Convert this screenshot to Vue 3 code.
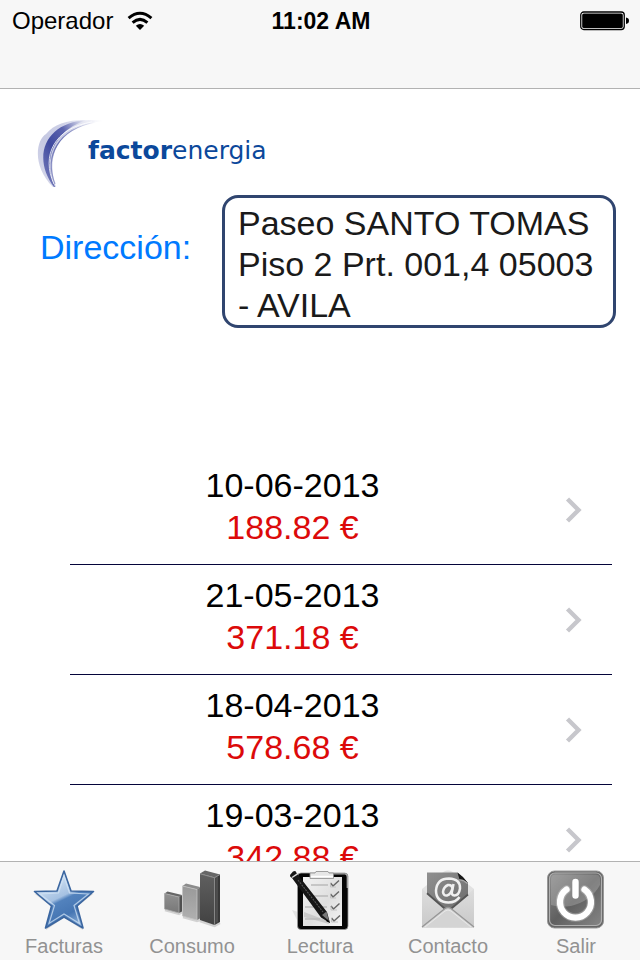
<template>
  <div class="screen">
    <header class="top-bar">
      <div class="status">
        <div class="carrier">
          <span>Operador</span>
          <svg class="wifi" viewBox="0 0 26 20" aria-hidden="true">
            <g fill="none" stroke="#000" stroke-width="3">
              <path d="M1.6 7.2 Q13 -2.6 24.4 7.2" />
              <path d="M5.6 11.6 Q13 5.2 20.4 11.6" />
            </g>
            <path d="M8.8 14.8 Q13 11.2 17.2 14.8 L13 19 Z" />
          </svg>
        </div>
        <time class="clock">11:02 AM</time>
        <div class="battery-wrap">
          <svg class="battery" viewBox="0 0 50 20" aria-hidden="true">
            <rect x="0.75" y="1" width="43.5" height="17.5" rx="3" fill="#fff" stroke="#000" stroke-width="1.3" />
            <rect x="2.2" y="2.4" width="40.6" height="14.7" rx="1.6" />
            <path d="M46 6.5 Q49 7 49 9.8 Q49 12.5 46 13 Z" />
          </svg>
        </div>
      </div>
    </header>

    <main class="content">
      <div class="logo">
        <svg class="swoosh" viewBox="0 0 70 70" aria-hidden="true">
          <defs>
            <linearGradient id="arc" x1="0" y1="1" x2="1" y2="0">
              <stop offset="0" stop-color="#7d82bd" />
              <stop offset="0.4" stop-color="#3f4a9f" />
              <stop offset="0.65" stop-color="#5c64ae" />
              <stop offset="1" stop-color="#fff" />
            </linearGradient>
          </defs>
          <path d="M17 69 C-4 48 0 22 10 16 C20 4 36 0 68 3 C26 4 8 36 20 69 Z" fill="url(#arc)" opacity="0.3" />
          <path d="M18 69 C-4 40 8 4 52 2 C24 9 4 36 19 69 Z" fill="url(#arc)" />
          <path d="M18 66 C5 38 18 10 56 4" fill="none" stroke="#fff" stroke-width="1" opacity="0.8" />
          <path d="M19 66 C8 38 22 11 60 4" fill="none" stroke="url(#arc)" stroke-width="1.2" opacity="0.7" />
        </svg>
        <span class="brand"><b>factor</b>energia</span>
      </div>

      <div class="address">
        <label for="direccion">Dirección:</label>
        <textarea id="direccion" v-model="address" rows="3" readonly spellcheck="false"></textarea>
      </div>

      <ul class="bills">
        <li v-for="bill in bills" :key="bill.date">
          <a href="#" @click.prevent>
            <span class="bill-text">
              <span class="date">{{ bill.date }}</span>
              <span class="amount">{{ bill.amount }} €</span>
            </span>
            <svg class="chevron" viewBox="0 0 18 28" aria-hidden="true">
              <path d="M2.5 3 L13.5 14 L2.5 25" fill="none" stroke="#c7c7cc" stroke-width="4.4" />
            </svg>
          </a>
        </li>
      </ul>
    </main>

    <nav class="tabs">
      <button v-for="tab in tabs" :key="tab" type="button" @click="current = tab">
        <svg v-if="tab === 'Facturas'" viewBox="0 0 64 64" aria-hidden="true">
          <defs>
            <linearGradient id="star" x1="0.2" y1="0" x2="0.7" y2="1">
              <stop offset="0" stop-color="#e4effa" />
              <stop offset="0.46" stop-color="#a5c1e2" />
              <stop offset="0.52" stop-color="#5282bd" />
              <stop offset="0.75" stop-color="#4676b3" />
              <stop offset="1" stop-color="#90b4dc" />
            </linearGradient>
          </defs>
          <path d="M32 5 L39 25 L61 26 L44.5 39 L51 62 L32 49.5 L14 62 L20 39 L3 26 L25 25 Z" fill="#bbb" opacity="0.6" />
          <path d="M32 3 L39 23 L61.5 23.5 L45 38 L51 60 L32 49 L13.5 60 L19.5 38 L2.5 23.5 L25 23 Z" fill="url(#star)" stroke="#3b66a0" stroke-width="1.6" stroke-linejoin="round" />
          <path d="M32 8 L37.5 25 L56.5 26 L42 37.5 L47.5 55.5 L32 46 L17 55.5 L22.5 37.5 L8 26 L26.5 25 Z" fill="none" stroke="#d3e4f6" stroke-width="1.2" opacity="0.75" />
        </svg>

        <svg v-else-if="tab === 'Consumo'" viewBox="0 0 64 64" aria-hidden="true">
          <defs>
            <linearGradient id="barSmall" x1="0" y1="0" x2="0" y2="1">
              <stop offset="0" stop-color="#919191" /><stop offset="1" stop-color="#777" />
            </linearGradient>
            <linearGradient id="barMid" x1="0" y1="0" x2="0" y2="1">
              <stop offset="0" stop-color="#999" /><stop offset="1" stop-color="#b0b0b0" />
            </linearGradient>
            <linearGradient id="barTall" x1="0" y1="0" x2="0" y2="1">
              <stop offset="0" stop-color="#606060" /><stop offset="1" stop-color="#424242" />
            </linearGradient>
          </defs>
          <path d="M5 42 L19 46 L22 44 M23 49 L37 53 L40 52 M40 53 L54.5 58 L60 55" fill="none" stroke="#d2d2d2" stroke-width="2.5" />
          <path d="M4.5 25.5 L7.5 23.5 L22 27 L19 29 Z" fill="#666" />
          <path d="M19 29 L22 27 V43.5 L19 45 Z" fill="#505050" />
          <path d="M4.5 25.5 L19 29 V45 L4.5 41 Z" fill="url(#barSmall)" stroke="#aaa" stroke-width="0.8" />
          <path d="M22.5 18 L26 15.5 L40 19 L37 21.5 Z" fill="#8c8c8c" />
          <path d="M37 21.5 L40 19 V50.5 L37 52 Z" fill="#777" />
          <path d="M22.5 18 L37 21.5 V52 L22.5 48 Z" fill="url(#barMid)" stroke="#c2c2c2" stroke-width="0.8" />
          <path d="M40 5.5 L45 2.5 L60 6.5 L54.5 9.5 Z" fill="#666" />
          <path d="M54.5 9.5 L60 6.5 V54 L54.5 57 Z" fill="#383838" />
          <path d="M40 5.5 L54.5 9.5 V57 L40 52 Z" fill="url(#barTall)" />
          <path d="M40 5.8 L54.7 9.8 V56.5 M55 9.5 L60 6.5" fill="none" stroke="#8c8c8c" stroke-width="1" />
          <path d="M57 9 V54.5" stroke="#777" stroke-width="0.7" />
        </svg>

        <svg v-else-if="tab === 'Lectura'" viewBox="0 0 64 64" aria-hidden="true">
          <defs>
            <linearGradient id="sheet" x1="0" y1="0" x2="1" y2="1">
              <stop offset="0" stop-color="#f2f2f2" /><stop offset="0.55" stop-color="#dfdfdf" /><stop offset="1" stop-color="#f4f4f4" />
            </linearGradient>
          </defs>
          <path d="M4 42 L10 44 V54 Z" fill="#e3e3e3" />
          <rect x="9.5" y="5" width="50.5" height="56.5" rx="3.5" fill="#050505" stroke="#999" stroke-width="0.8" />
          <path d="M44 5.8 H57 Q59.3 6 59.3 9 V20" fill="none" stroke="#aaa" stroke-width="1.3" />
          <path d="M15 9 H54 V58 H15 Z" fill="url(#sheet)" />
          <path d="M16 44 L40 53 L41 56 L16 49 Z" fill="#c9c9c9" />
          <path d="M22 5 H27 L28 3.5 H40 L41 5 H45.5 V10.5 H22 Z" fill="#e6e6e6" stroke="#8c8c8c" stroke-width="0.8" />
          <path d="M23 8.5 H45" stroke="#fff" stroke-width="1.5" />
          <path d="M23 17 H40 M18 28 H40 M17 39 H39 M17 51 H32" stroke="#bababa" stroke-width="1.6" />
          <path d="M42.5 15 L45 18 L51 12.5 M42.5 26 L45 29 L51 23.5 M43 38 L45.5 41 L51.5 35.5 M43.5 50 L46 53 L52 47.5" fill="none" stroke="#666" stroke-width="1.4" />
          <path d="M42.5 15 V19 H48 M42.5 26 V30 H48 M43 38 V42 H49 M43.5 50 V54 H50" fill="none" stroke="#bbb" stroke-width="0.8" />
          <path d="M2 7 L5 3.5 Q8 2 8.5 5 L39 44 L42 55 L33 49.5 L4 10 Q1.5 9 2 7 Z" fill="#161616" />
          <path d="M4 9.5 L9.5 5.8" stroke="#ddd" stroke-width="1.5" />
          <path d="M10 12 L35 44" stroke="#555" stroke-width="1.1" stroke-dasharray="2 1" />
          <path d="M34 47 L38.5 43.5 L41 53 Z" fill="#777" />
          <path d="M39.5 51.5 L42 55 L38 53 Z" fill="#000" />
        </svg>

        <svg v-else-if="tab === 'Contacto'" viewBox="0 0 64 64" aria-hidden="true">
          <defs>
            <linearGradient id="letter" x1="0" y1="0" x2="1" y2="1">
              <stop offset="0" stop-color="#909090" /><stop offset="1" stop-color="#6c6c6c" />
            </linearGradient>
            <linearGradient id="envelope" x1="0" y1="0" x2="0" y2="1">
              <stop offset="0" stop-color="#ddd" /><stop offset="1" stop-color="#c9c9c9" />
            </linearGradient>
          </defs>
          <path d="M6 21 L28 3.5 Q32 1.5 36 3.5 L58 21 V59.5 H6 Z" fill="#e2e2e2" />
          <path d="M11 4.5 H41.5 L52 15 V42 H11 Z" fill="url(#letter)" />
          <path d="M41.5 4.5 L43.5 11.5 L52 15 L47 9 Z" fill="#181818" />
          <path d="M42.5 12 Q47 11 51.5 15.5" fill="none" stroke="#aaa" stroke-width="1.2" />
          <path d="M6 21 L28 40 Q32 43 36 40 L58 21 V59.5 H6 Z" fill="url(#envelope)" />
          <path d="M11 25.3 L28 40 Q32 43 36 40 L52 26.5" fill="none" stroke="#555" stroke-width="1.8" />
          <path d="M6 59 L29 40.5 Q32 38.5 35 40.5 L58 59" fill="#d4d4d4" stroke="#969696" stroke-width="1.3" />
          <path d="M9 59 L29 43 Q32 41 35 43 L55 59" fill="none" stroke="#eee" stroke-width="0.8" />
          <g fill="none" stroke="#f0f0f0" stroke-width="2.5">
            <path d="M43.5 29 Q40 34.5 32.5 34.5 Q20 34 20 22.5 Q21 10.5 33 10.5 Q44.5 11 44 20.5 Q43 27.5 38.5 27.5 Q35 27 36 23.5 L37.5 16" />
            <path d="M36.5 20 Q35.5 16.5 32 17 Q27.5 19 27 24 Q27.5 28 31 27.5 Q35 26.5 36.5 20" />
          </g>
        </svg>

        <svg v-else viewBox="0 0 64 64" aria-hidden="true">
          <defs>
            <linearGradient id="power" x1="0" y1="0" x2="1" y2="1">
              <stop offset="0" stop-color="#8c8c8c" /><stop offset="0.5" stop-color="#606060" /><stop offset="1" stop-color="#858585" />
            </linearGradient>
          </defs>
          <rect x="3.5" y="3" width="56" height="57" rx="7" fill="#666" stroke="#999" stroke-width="1" />
          <rect x="5.5" y="5" width="52" height="52.5" rx="5.5" fill="url(#power)" stroke="#b0b0b0" stroke-width="1.2" />
          <path d="M7 11 Q7 6.5 11 6.5 H52 Q56 6.5 56 11 V17 Q47 33 27 38 Q15 40 7 37 Z" fill="#ccc" opacity="0.3" />
          <g fill="none" stroke="#fff" stroke-linecap="round">
            <path d="M22.5 21.5 A15.5 15.5 0 1 0 40.5 21.5" stroke-width="8.5" opacity="0.25" />
            <path d="M22.5 21.5 A15.5 15.5 0 1 0 40.5 21.5" stroke-width="6.2" />
            <path d="M31.5 14 V27.5" stroke-width="6.4" />
          </g>
        </svg>
        <span>{{ tab }}</span>
      </button>
    </nav>
  </div>
</template>

<script setup>
import { ref } from 'vue'

const address = ref('Paseo SANTO TOMAS Piso 2 Prt. 001,4 05003 - AVILA')

const bills = [
  { date: '10-06-2013', amount: '188.82' },
  { date: '21-05-2013', amount: '371.18' },
  { date: '18-04-2013', amount: '578.68' },
  { date: '19-03-2013', amount: '342.88' },
]

const tabs = ['Facturas', 'Consumo', 'Lectura', 'Contacto', 'Salir']
const current = ref('Facturas')
</script>

<style>
body {
  margin: 0;
  background: #fff;
}
</style>

<style scoped>
.screen {
  display: flex;
  flex-direction: column;
  height: 100vh;
  font-family: "Liberation Sans", Arial, sans-serif;
  font-size: 34px;
  color: #000;
}

/* barra superior */
.top-bar {
  flex: none;
  min-height: 88px;
  background: #f7f7f7;
  border-bottom: 1px solid #b2b2b2;
}

.status {
  display: grid;
  grid-template-columns: 1fr auto 1fr;
  align-items: center;
  height: 42px;
  padding: 0 10px 0 12px;
  font-size: 24px;
}

.carrier {
  display: flex;
  align-items: center;
  gap: 14px;
}

.wifi {
  width: 26px;
  height: 20px;
}

.clock {
  font-size: 23px;
  font-weight: bold;
}

.battery-wrap {
  display: flex;
  justify-content: flex-end;
}

.battery {
  width: 50px;
  height: 20px;
}

.content {
  flex: 1;
  min-height: 0;
  overflow-y: auto;
  scrollbar-width: none;
}

.logo {
  display: flex;
  align-items: center;
  padding: 29px 0 7px 36px;
}

.swoosh {
  width: 70px;
  height: 70px;
}

.brand {
  margin-left: -18px;
  padding-bottom: 4px;
  font-family: "DejaVu Sans", Verdana, sans-serif;
  font-size: 25px;
  line-height: 30px;
  color: #0b489b;
}

/* dirección */
.address {
  display: grid;
  grid-template-columns: 182px 1fr;
  align-items: start;
  padding: 0 24px 0 40px;
}

.address label {
  padding-top: 32px;
  line-height: 41px;
  color: #007aff;
}

.address textarea {
  box-sizing: border-box;
  width: 100%;
  height: 133px;
  padding: 5px 8px 0 13px;
  border: 3px solid #30456f;
  border-radius: 16px;
  outline: none;
  resize: none;
  overflow: hidden;
  background: #fff;
  font: inherit;
  line-height: 41px;
  color: #1a1a1a;
}

/* facturas */
.bills {
  margin: 127px 28px 0 70px;
  padding: 0;
  list-style: none;
}

.bills li {
  border-bottom: 1px solid #05053a;
}

.bills a {
  display: flex;
  align-items: center;
  padding-right: 29px;
  color: inherit;
  text-decoration: none;
}

.bill-text {
  flex: 1;
  display: flex;
  flex-direction: column;
  padding: 9px 68px 16px 18px;
  line-height: 42px;
  text-align: center;
}

.amount {
  color: #dc0a0a;
}

.chevron {
  flex: none;
  width: 18px;
  height: 28px;
}

/* pestañas */
.tabs {
  flex: none;
  display: flex;
  border-top: 1px solid #b2b2b2;
  background: #f7f7f7;
}

.tabs button {
  flex: 1;
  display: flex;
  flex-direction: column;
  align-items: center;
  padding: 6px 0 0;
  border: 0;
  background: none;
  font: inherit;
  font-size: 20px;
  line-height: 28px;
  color: #929292;
  cursor: pointer;
}

.tabs svg {
  width: 64px;
  height: 64px;
}
</style>
